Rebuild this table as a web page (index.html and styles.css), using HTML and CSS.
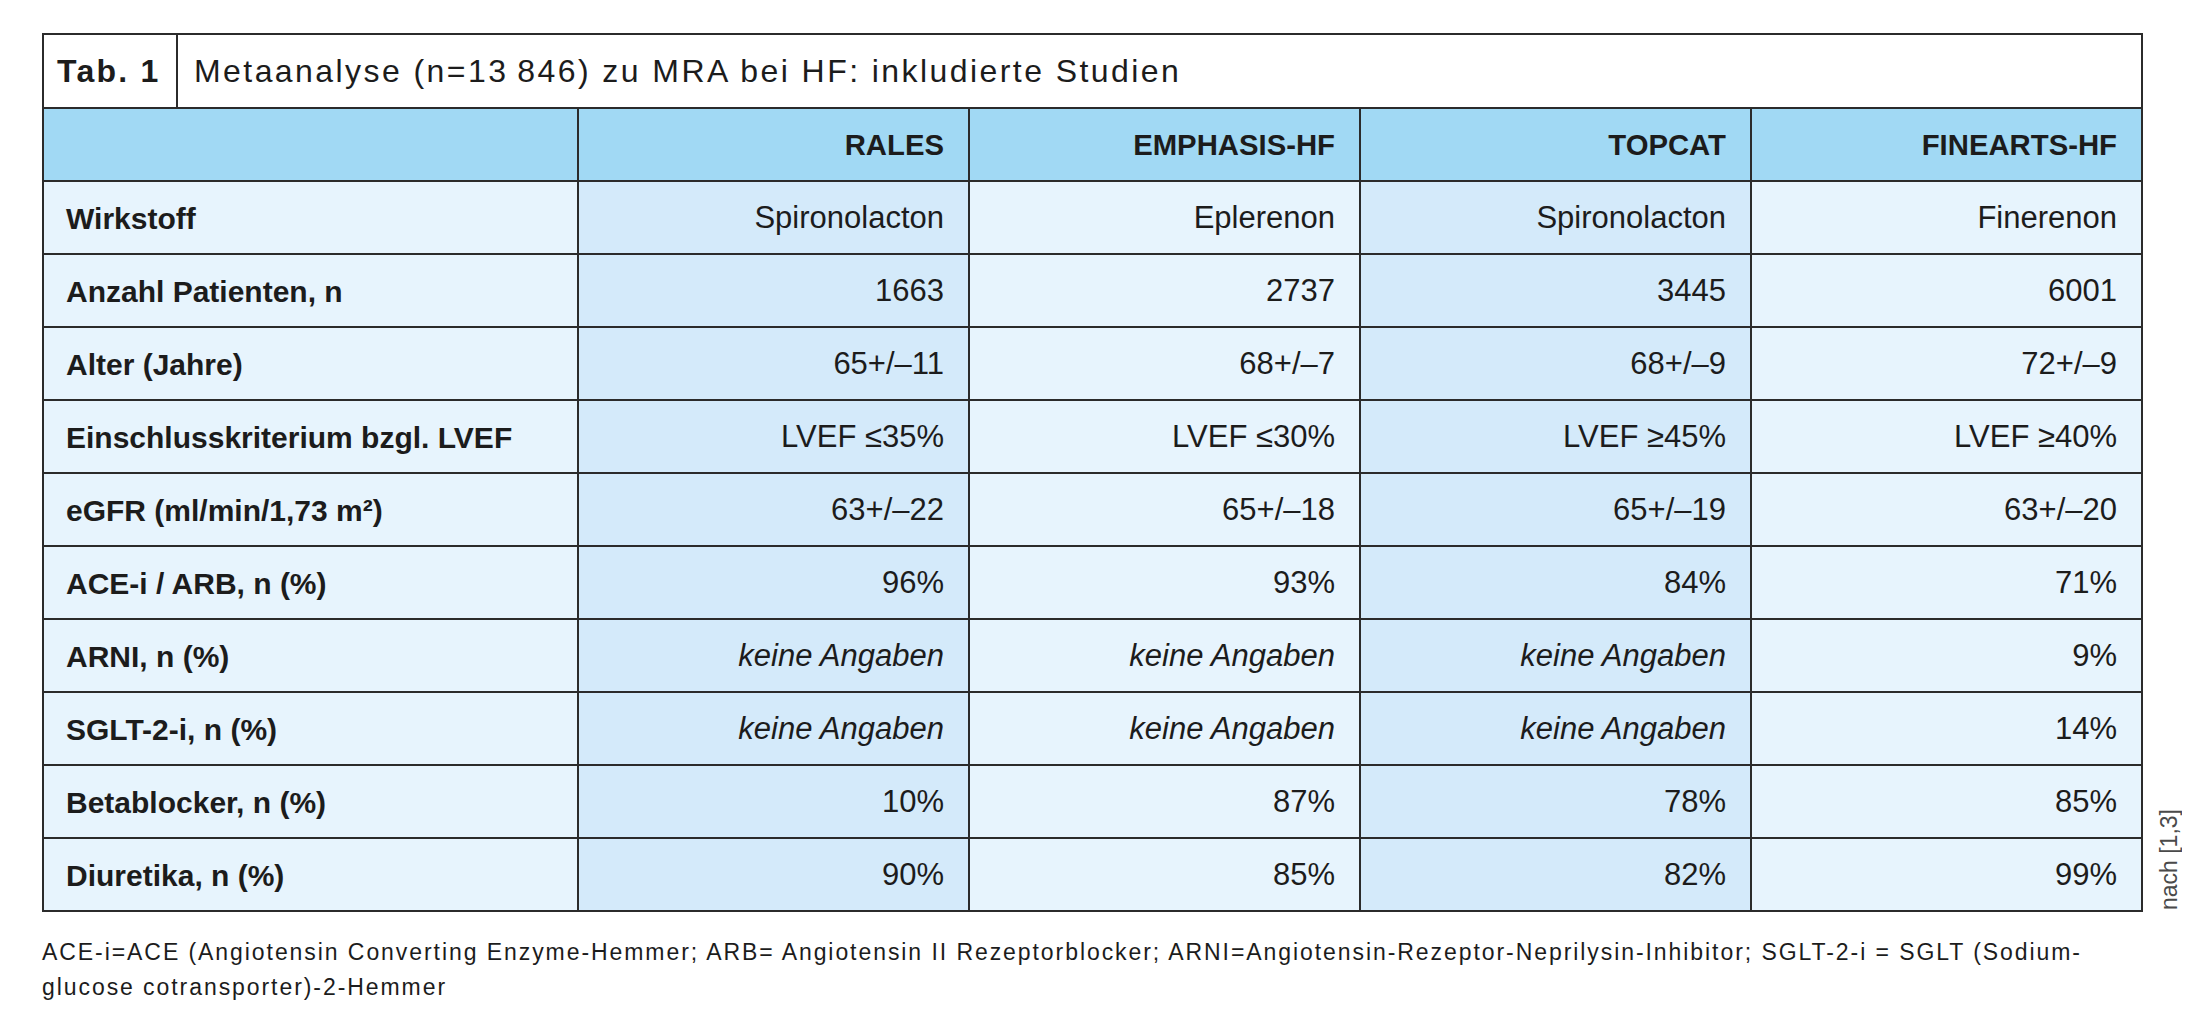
FILE: index.html
```html
<!DOCTYPE html>
<html lang="de">
<head>
<meta charset="utf-8">
<title>Tab. 1 – Metaanalyse zu MRA bei HF</title>
<link rel="stylesheet" href="styles.css">
</head>
<body>
<div class="page">
  <div class="figure">
    <div class="table-wrap">
      <div class="title-bar">
        <div class="tab-label">Tab. 1</div>
        <div class="tab-title">Metaanalyse (n=13&#8201;846) zu MRA bei HF: inkludierte Studien</div>
      </div>
      <div class="grid">
        <div class="cell head label"></div>
        <div class="cell head">RALES</div>
        <div class="cell head">EMPHASIS-HF</div>
        <div class="cell head">TOPCAT</div>
        <div class="cell head">FINEARTS-HF</div>

        <div class="cell label">Wirkstoff</div>
        <div class="cell alt">Spironolacton</div>
        <div class="cell">Eplerenon</div>
        <div class="cell alt">Spironolacton</div>
        <div class="cell">Finerenon</div>

        <div class="cell label">Anzahl Patienten, n</div>
        <div class="cell alt">1663</div>
        <div class="cell">2737</div>
        <div class="cell alt">3445</div>
        <div class="cell">6001</div>

        <div class="cell label">Alter (Jahre)</div>
        <div class="cell alt">65+/–11</div>
        <div class="cell">68+/–7</div>
        <div class="cell alt">68+/–9</div>
        <div class="cell">72+/–9</div>

        <div class="cell label">Einschlusskriterium bzgl. LVEF</div>
        <div class="cell alt">LVEF ≤35%</div>
        <div class="cell">LVEF ≤30%</div>
        <div class="cell alt">LVEF ≥45%</div>
        <div class="cell">LVEF ≥40%</div>

        <div class="cell label">eGFR (ml/min/1,73 m²)</div>
        <div class="cell alt">63+/–22</div>
        <div class="cell">65+/–18</div>
        <div class="cell alt">65+/–19</div>
        <div class="cell">63+/–20</div>

        <div class="cell label">ACE-i / ARB, n (%)</div>
        <div class="cell alt">96%</div>
        <div class="cell">93%</div>
        <div class="cell alt">84%</div>
        <div class="cell">71%</div>

        <div class="cell label">ARNI, n (%)</div>
        <div class="cell alt na">keine Angaben</div>
        <div class="cell na">keine Angaben</div>
        <div class="cell alt na">keine Angaben</div>
        <div class="cell">9%</div>

        <div class="cell label">SGLT-2-i, n (%)</div>
        <div class="cell alt na">keine Angaben</div>
        <div class="cell na">keine Angaben</div>
        <div class="cell alt na">keine Angaben</div>
        <div class="cell">14%</div>

        <div class="cell label">Betablocker, n (%)</div>
        <div class="cell alt">10%</div>
        <div class="cell">87%</div>
        <div class="cell alt">78%</div>
        <div class="cell">85%</div>

        <div class="cell label">Diuretika, n (%)</div>
        <div class="cell alt">90%</div>
        <div class="cell">85%</div>
        <div class="cell alt">82%</div>
        <div class="cell">99%</div>
      </div>
    </div>
    <div class="source">nach [1,3]</div>
  </div>
  <p class="footnote">ACE-i=ACE (Angiotensin Converting Enzyme-Hemmer; ARB= Angiotensin II Rezeptorblocker; ARNI=Angiotensin-Rezeptor-Neprilysin-Inhibitor; SGLT-2-i = SGLT (Sodium-<br>glucose cotransporter)-2-Hemmer</p>
</div>
</body>
</html>
```
FILE: styles.css
```css
html, body {
  margin: 0;
  padding: 0;
  background: #ffffff;
}

body {
  font-family: "Liberation Sans", Arial, sans-serif;
  color: #1c1c1c;
}

.page {
  padding: 33px 0 0 42px;
}

.figure {
  display: flex;
  align-items: flex-end;
  gap: 14px;
}

.table-wrap {
  width: 2101px;
}

.title-bar {
  display: grid;
  grid-template-columns: 132px 1fr;
  gap: 2px;
  padding: 2px 2px 2px 2px;
  background: #2b2b2b;
}

.tab-label,
.tab-title {
  background: #ffffff;
  height: 72px;
  display: flex;
  align-items: center;
  font-size: 32px;
}

.tab-label {
  font-weight: bold;
  padding-left: 13px;
  letter-spacing: 0.07em;
}

.tab-title {
  padding-left: 16px;
  letter-spacing: 0.076em;
}

.grid {
  display: grid;
  grid-template-columns: 533px repeat(4, 389px);
  grid-auto-rows: 71px;
  gap: 2px;
  padding: 0 2px 2px 2px;
  background: #2b2b2b;
}

.cell {
  background: #e7f4fd;
  display: flex;
  align-items: center;
  justify-content: flex-end;
  padding: 0 24px 0 22px;
  font-size: 31px;
}

.cell.alt {
  background: #d4eafa;
}

.cell.label {
  justify-content: flex-start;
  font-weight: bold;
  font-size: 30px;
  padding-top: 3px;
}

.cell.head {
  background: #a1d9f4;
  font-weight: bold;
  font-size: 29.3px;
}

.cell.na {
  font-style: italic;
}

.source {
  writing-mode: vertical-rl;
  transform: rotate(180deg);
  font-size: 23px;
  line-height: 25px;
  color: #4a4a4a;
  padding-top: 2px;
}

.footnote {
  margin: 23px 0 0 0;
  font-size: 23px;
  line-height: 35px;
  letter-spacing: 0.084em;
  color: #1c1c1c;
}
```
